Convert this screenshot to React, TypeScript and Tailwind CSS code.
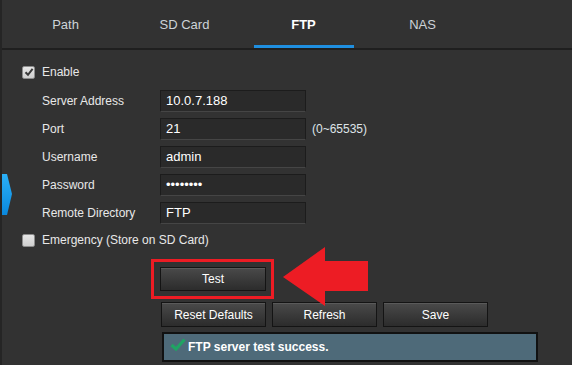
import React from "react";

const tabs = ["Path", "SD Card", "FTP", "NAS"];

const fields = [
  { label: "Server Address", value: "10.0.7.188" },
  { label: "Port", value: "21", hint: "(0~65535)" },
  { label: "Username", value: "admin" },
  { label: "Password", value: "••••••••" },
  { label: "Remote Directory", value: "FTP" },
];

const CheckBox = ({ checked }: { checked?: boolean }) => (
  <div className="w-[13px] h-[13px] rounded-[2px] border border-[#8c8c8c] bg-gradient-to-b from-[#e6e6e6] to-[#cfcfcf] flex items-center justify-center">
    {checked && (
      <svg width="10" height="10" viewBox="0 0 10 10">
        <path d="M1.5 5.2 L4 7.8 L8.6 1.8" fill="none" stroke="#3a3a3a" strokeWidth="2" />
      </svg>
    )}
  </div>
);

const Btn = ({ children, w }: { children: React.ReactNode; w: string }) => (
  <button
    className={`${w} h-full border border-[#141414] bg-gradient-to-b from-[#4a4a4a] to-[#2c2c2c] shadow-[inset_0_1px_0_#5a5a5a] text-white text-[12px] flex items-center justify-center`}
  >
    {children}
  </button>
);

export default function App() {
  return (
    <div className="relative w-[572px] h-[365px] overflow-hidden bg-[#323232] border-l-2 border-[#252525] font-['Liberation_Sans',Arial,sans-serif]">
      {/* tabs */}
      <div className="flex h-[50px] border-b-2 border-[#1f1f1f] pl-[4px]">
        {tabs.map((t) => (
          <div key={t} className="w-[119px] flex flex-col">
            <div
              className={`flex-1 flex items-center justify-center pt-[5px] text-[13px] ${
                t === "FTP" ? "text-white font-bold" : "text-[#cdd3d8]"
              }`}
            >
              {t}
            </div>
            <div className={`h-[3px] w-[100px] mx-auto ${t === "FTP" ? "bg-[#1f8fe0]" : ""}`} />
          </div>
        ))}
      </div>

      {/* form */}
      <div className="pl-[20px] pt-[11px] text-[12px] text-[#e8e8e8]">
        <div className="h-[22px] flex items-center gap-[7px]">
          <CheckBox checked />
          <span>Enable</span>
        </div>

        <div className="mt-[7px] pl-[20px]">
          {fields.map((f) => (
            <div key={f.label} className="h-[22px] mb-[6px] flex items-center">
              <span className="w-[118px]">{f.label}</span>
              <div className="w-[146px] h-full bg-[#2a2a2a] border border-[#1c1c1c] border-b-[#454545] pl-[5px] flex items-center text-[13px] text-white">
                {f.value}
              </div>
              {f.hint && <span className="ml-[6px] text-[#dfe4e8]">{f.hint}</span>}
            </div>
          ))}
        </div>

        <div className="mt-[-1px] h-[22px] flex items-center gap-[7px]">
          <CheckBox />
          <span>Emergency (Store on SD Card)</span>
        </div>

        <div className="ml-[129px] mt-[8px] w-[123px] border-[3px] border-[#ed1c24] pt-[5px] pb-[5px] pl-[6px]">
          <div className="h-[24px]">
            <Btn w="w-[106px]">Test</Btn>
          </div>
        </div>

        <div className="ml-[139px] mt-[3px] h-[25px] flex gap-[6px]">
          <Btn w="w-[105px]">Reset Defaults</Btn>
          <Btn w="w-[105px]">Refresh</Btn>
          <Btn w="w-[105px]">Save</Btn>
        </div>

        <div className="ml-[140px] mt-[5px] w-[376px] h-[30px] bg-[#4e6a79] border-2 border-[#111] flex items-center pl-[6px] gap-[2px]">
          <svg width="16" height="14" viewBox="0 0 16 14" className="mt-[-5px]">
            <path d="M1.5 7 L6 11 L14.5 1.5" fill="none" stroke="#1fa463" strokeWidth="3.2" />
          </svg>
          <span className="text-white font-bold text-[12px]">FTP server test success.</span>
        </div>
      </div>

      {/* left side chevron */}
      <svg className="absolute left-[-2px] top-[174px]" width="13" height="42" viewBox="0 0 13 42">
        <defs>
          <linearGradient id="chev" x1="0" y1="0" x2="0" y2="1">
            <stop offset="0" stopColor="#2bb0f7" />
            <stop offset="1" stopColor="#0a88dd" />
          </linearGradient>
        </defs>
        <polygon points="0,0 7,0 12,20 7,41 0,41" fill="url(#chev)" />
      </svg>

      {/* red annotation arrow */}
      <svg className="absolute left-[280px] top-[246px]" width="88" height="62" viewBox="0 0 88 62">
        <polygon points="1,31 43,1 43,15 86,15 86,45 43,45 43,60" fill="#ed1c24" />
      </svg>
    </div>
  );
}
